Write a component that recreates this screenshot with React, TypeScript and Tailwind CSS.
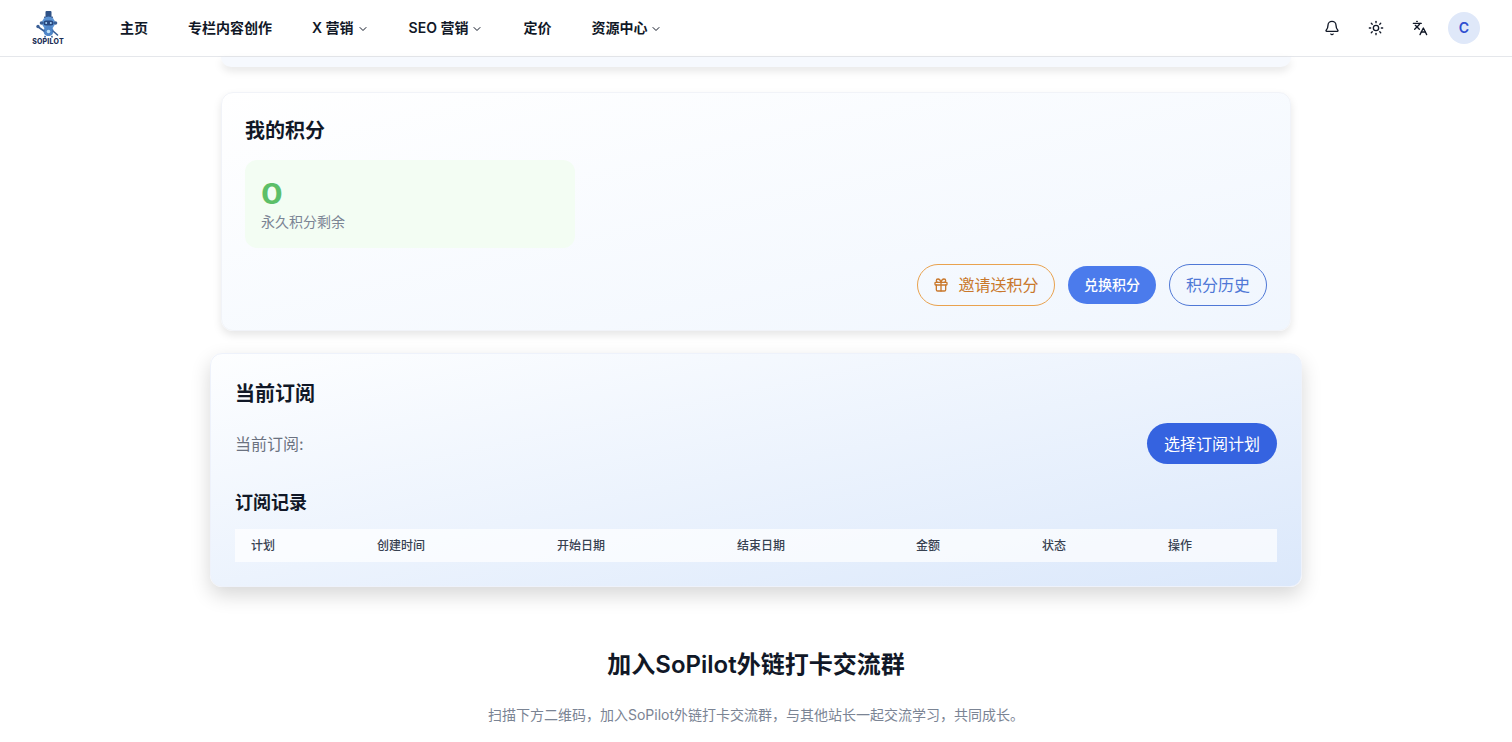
import { Bell, ChevronDown, Gift, Languages, Sun } from "lucide-react";

const font = "font-['Inter','Noto_Sans_CJK_SC','Noto_Sans',sans-serif]";

function Logo() {
  return (
    <div className="flex w-8 flex-col items-center">
      <svg width="30" height="27" viewBox="0 0 30 27" className="block">
        <rect x="12.5" y="0" width="6" height="6" rx="1" fill="#2f5286" />
        <rect x="11" y="5.5" width="9" height="1.6" rx="0.8" fill="#27477f" />
        <circle cx="15.5" cy="12" r="6.5" fill="#5b93d3" />
        <rect x="10.5" y="9.5" width="10" height="5" rx="2.5" fill="#27477f" />
        <circle cx="13.2" cy="12" r="1" fill="#a9d6f7" />
        <circle cx="17.8" cy="12" r="1" fill="#a9d6f7" />
        <circle cx="8.5" cy="12" r="1.8" fill="#3a5f96" />
        <circle cx="22.5" cy="12" r="1.8" fill="#3a5f96" />
        <path d="M10.5 20a5 5 0 0 1 10 0c0 3-2.2 5-5 5s-5-2-5-5z" fill="#4f86c9" />
        <circle cx="15.5" cy="20.5" r="1.8" fill="#c0e1f8" />
        <path d="M11 20L6 16.5M20 20l4.5 4" stroke="#3a5f96" strokeWidth="1.6" strokeLinecap="round" />
        <circle cx="5" cy="15.5" r="1.7" fill="#3a5f96" />
        <path d="M12.5 25l-1 1.5M18.5 25l1 1.5" stroke="#3a5f96" strokeWidth="1.4" />
      </svg>
      <span className="text-[7px] leading-[8px] font-extrabold tracking-[0.2px] whitespace-nowrap text-[#1c2f56]">SOPILOT</span>
    </div>
  );
}

function NavItem({ label, menu }: { label: string; menu?: boolean }) {
  return (
    <span className="flex items-center gap-[3px] text-sm font-semibold text-[#111827]">
      {label}
      {menu && <ChevronDown size={12} strokeWidth={2} className="mt-px" />}
    </span>
  );
}

function IconButton({ children }: { children: React.ReactNode }) {
  return <button className="flex h-8 w-8 items-center justify-center text-[#111827]">{children}</button>;
}

export default function App() {
  const cols = [
    ["计划", "w-[126px]"],
    ["创建时间", "w-[180px]"],
    ["开始日期", "w-[180px]"],
    ["结束日期", "w-[179px]"],
    ["金额", "w-[126px]"],
    ["状态", "w-[126px]"],
    ["操作", "w-[125px]"],
  ];
  return (
    <div className={`${font} h-[742px] w-[1512px] overflow-hidden bg-white`}>
      <header className="flex h-[57px] items-center border-b border-[#e5e7eb] bg-white px-8">
        <Logo />
        <nav className="ml-[56px] flex items-center gap-10">
          <NavItem label="主页" />
          <NavItem label="专栏内容创作" />
          <NavItem label="X 营销" menu />
          <NavItem label="SEO 营销" menu />
          <NavItem label="定价" />
          <NavItem label="资源中心" menu />
        </nav>
        <div className="ml-auto flex items-center gap-3">
          <IconButton><Bell size={16} strokeWidth={2} /></IconButton>
          <IconButton><Sun size={16} strokeWidth={2} /></IconButton>
          <IconButton><Languages size={16} strokeWidth={2} /></IconButton>
          <div className="flex h-8 w-8 items-center justify-center rounded-full bg-[#dfe8f9] text-sm font-semibold text-[#2f4fd0]">
            C
          </div>
        </div>
      </header>

      <main className="flex flex-col items-center">
        <div className="h-[10px] w-[1070px] rounded-b-xl bg-[#f6f9fe] shadow-[0_4px_8px_rgba(0,0,0,0.1)]" />

        <section className="mt-[25px] h-[239px] w-[1070px] rounded-xl border border-[#f1f3f8] bg-gradient-to-br from-white to-[#f0f6fe] py-6 pr-[23px] pl-[23px] shadow-[0_4px_8px_rgba(0,0,0,0.1)]">
          <h2 className="text-xl leading-7 font-semibold text-[#111827]">我的积分</h2>
          <div className="mt-[15px] h-[88px] w-[330px] rounded-xl bg-[#f3fdf3] px-4 pt-4">
            <div className="origin-left scale-x-[1.15] text-[28px] leading-9 font-bold text-[#5cbf68]">0</div>
            <div className="text-sm leading-5 text-[#7b8494]">永久积分剩余</div>
          </div>
          <div className="mt-4 flex items-center justify-end gap-[13px]">
            <button className="flex h-[42px] w-[138px] items-center justify-center gap-[9px] rounded-full border border-[#e9a24e] text-base text-[#c9782c]">
              <Gift size={16} strokeWidth={2} />
              邀请送积分
            </button>
            <button className="h-[38px] w-[88px] rounded-full bg-[#4b7bec] text-sm font-medium text-white">
              兑换积分
            </button>
            <button className="h-[42px] w-[98px] rounded-full border border-[#4f78d6] text-base text-[#4f78d6]">
              积分历史
            </button>
          </div>
        </section>

        <section className="mt-[22px] h-[234px] w-[1092px] rounded-xl border border-[#eef2fb] bg-gradient-to-br from-[#fdfeff] to-[#dbe8fb] px-6 pt-[26px] shadow-[0_8px_20px_rgba(0,0,0,0.16)]">
          <h2 className="text-xl leading-7 font-semibold text-[#111827]">当前订阅</h2>
          <div className="mt-[15px] flex items-center justify-between">
            <span className="text-base text-[#6b7280]">当前订阅:</span>
            <button className="h-[41px] w-[130px] rounded-full bg-[#3563e0] text-base text-white">
              选择订阅计划
            </button>
          </div>
          <h3 className="mt-[25px] text-lg leading-7 font-semibold text-[#111827]">订阅记录</h3>
          <div className="mt-[12px] flex h-[33px] items-center bg-white/70">
            {cols.map(([label, w]) => (
              <div key={label} className={`${w} pl-4 text-xs font-medium text-[#374151]`}>
                {label}
              </div>
            ))}
          </div>
        </section>

        <h2 className="mt-[62px] text-2xl leading-8 font-semibold text-[#111827]">加入SoPilot外链打卡交流群</h2>
        <p className="mt-[24px] text-sm leading-5 text-[#7b8494]">
          扫描下方二维码，加入SoPilot外链打卡交流群，与其他站长一起交流学习，共同成长。
        </p>
      </main>
    </div>
  );
}
